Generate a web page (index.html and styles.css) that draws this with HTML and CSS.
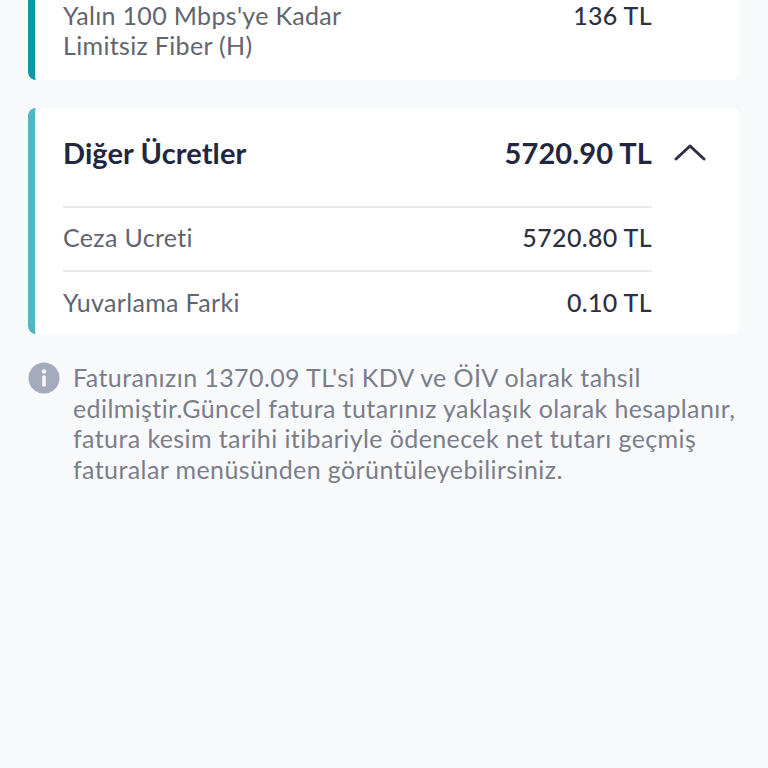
FILE: index.html
```html
<!DOCTYPE html>
<html lang="tr">
<head>
    <meta charset="UTF-8">
    <meta name="viewport" content="width=device-width, initial-scale=1.0">
    <title>Fatura Detayı</title>
    <link rel="stylesheet" href="styles.css">
</head>
<body>
    <div class="container">
        <div class="card card-first">
            <div class="plan-row">
                <div class="row-label plan-name">Yalın 100 Mbps'ye Kadar Limitsiz Fiber (H)</div>
                <div class="row-value plan-price">136 TL</div>
            </div>
        </div>

        <div class="card card-other">
            <div class="card-header">
                <div class="card-title">Diğer Ücretler</div>
                <div class="card-total">5720.90 TL</div>
                <svg class="chevron" width="32" height="18" viewBox="0 0 32 18">
                    <path d="M2 16 L16 3 L30 16" fill="none" stroke="#2d3044" stroke-width="3" stroke-linecap="round" stroke-linejoin="round"/>
                </svg>
            </div>
            <div class="fee-row">
                <div class="row-label">Ceza Ucreti</div>
                <div class="row-value">5720.80 TL</div>
            </div>
            <div class="fee-row">
                <div class="row-label">Yuvarlama Farki</div>
                <div class="row-value">0.10 TL</div>
            </div>
        </div>

        <div class="info">
            <svg class="info-icon" width="32" height="32" viewBox="0 0 32 32">
                <circle cx="16" cy="16" r="15.5" fill="#a3abbd"/>
                <circle cx="16" cy="9.5" r="2.2" fill="#f7f8fb"/>
                <rect x="14.2" y="13.5" width="3.6" height="11" rx="1.2" fill="#f7f8fb"/>
            </svg>
            <p class="info-text">Faturanızın 1370.09 TL'si KDV ve ÖİV olarak tahsil edilmiştir.Güncel fatura tutarınız yaklaşık olarak hesaplanır, fatura kesim tarihi itibariyle ödenecek net tutarı geçmiş faturalar menüsünden görüntüleyebilirsiniz.</p>
        </div>
    </div>
</body>
</html>
```
FILE: styles.css
```css
* {
    margin: 0;
    padding: 0;
    box-sizing: border-box;
    font-family: 'Lato', 'Open Sans', sans-serif;
}

html, body {
    height: 768px;
    overflow: hidden;
}

body {
    background-color: #f8f9fb;
}

.container {
    padding: 0 28px;
}

.card {
    background-color: white;
    border-radius: 8px;
    border-left: 7px solid #52b6c2;
}

.card-first {
    border-left-color: #0f97a9;
    margin-top: -40px;
    height: 120px;
    padding: 40px 88px 0 28px;
}

.plan-row {
    display: flex;
    justify-content: space-between;
}

.plan-name {
    width: 300px;
    line-height: 30px;
}

.plan-price {
    line-height: 30px;
}

.card-other {
    margin-top: 28px;
    height: 226px;
    padding: 0 88px 0 28px;
}

.card-header {
    position: relative;
    height: 100px;
    padding-bottom: 10px;
    display: flex;
    align-items: center;
    justify-content: space-between;
    border-bottom: 2px solid #e9eaec;
}

.card-title, .card-total {
    font-size: 29px;
    font-weight: 700;
    letter-spacing: 0.1px;
    color: #23263f;
}

.chevron {
    position: absolute;
    right: -54px;
    top: 35px;
}

.fee-row {
    height: 64px;
    padding-bottom: 5px;
    display: flex;
    align-items: center;
    justify-content: space-between;
    border-bottom: 2px solid #e9eaec;
}

.fee-row:last-child {
    border-bottom: none;
}

.row-label {
    font-size: 25px;
    letter-spacing: 0.33px;
    color: #62646f;
}

.row-value {
    font-size: 25px;
    font-weight: 500;
    letter-spacing: 0.35px;
    color: #2d3044;
}

.info {
    display: flex;
    gap: 13px;
    margin-top: 28px;
}

.info-icon {
    flex-shrink: 0;
}

.info-text {
    font-size: 25px;
    line-height: 30.7px;
    letter-spacing: 0.4px;
    color: #7b7e8a;
}
```
